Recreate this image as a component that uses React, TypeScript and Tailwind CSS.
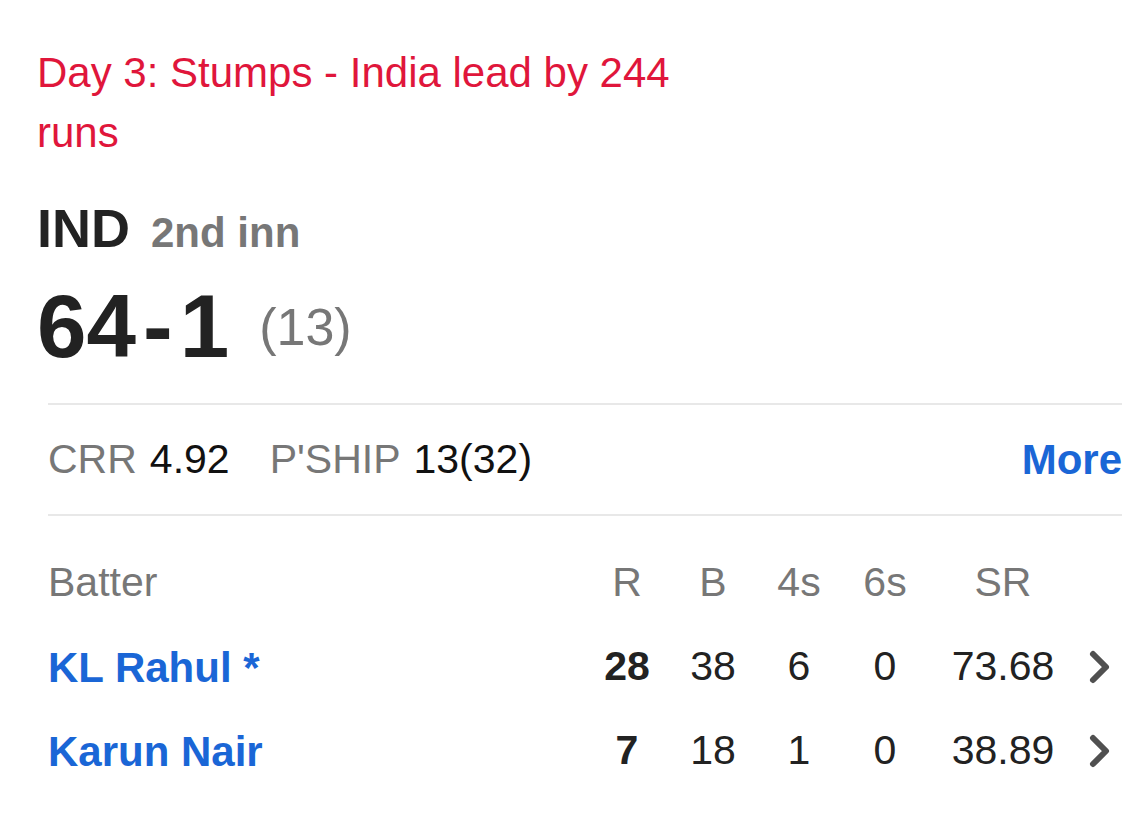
const batters = [
  { name: 'KL Rahul *', r: '28', b: '38', fours: '6', sixes: '0', sr: '73.68' },
  { name: 'Karun Nair', r: '7', b: '18', fours: '1', sixes: '0', sr: '38.89' },
];

const Chevron = () => (
  <svg width="24" height="36" viewBox="0 0 24 36" className="block">
    <polyline points="5,5 18,18 5,31" fill="none" stroke="#505050" strokeWidth="6" strokeLinecap="round" strokeLinejoin="round" />
  </svg>
);

const App = () => {
  return <div className="min-h-screen bg-white pl-[37px] pr-[22px] pt-[43px] font-['Liberation_Sans',Arial,sans-serif]">
      {/* Match status */}
      <p className="w-[680px] text-[42px] leading-[60px] text-[#e0163b]">
        Day 3: Stumps - India lead by 244 runs
      </p>

      {/* Team + innings */}
      <div className="mt-[38px] flex items-baseline leading-none">
        <span className="text-[54px] font-bold text-[#222]">IND</span>
        <span className="ml-[21px] text-[42px] font-bold text-[#777]">2nd inn</span>
      </div>

      {/* Score */}
      <div className="mt-[27px] flex items-center leading-none">
        <span className="text-[89px] font-bold text-[#222]">
          64<span className="mx-[7px]">-</span>1
        </span>
        <span className="ml-[30px] text-[52px] text-[#777]">(13)</span>
      </div>

      <div className="ml-[11px] mt-[32px]">
        <div className="h-[2px] bg-[#e8e8e8]" />
        {/* Run rates */}
        <div className="flex h-[109px] items-center justify-between text-[41px]">
          <div className="flex items-center">
            <span className="text-[#777]">CRR</span>
            <span className="ml-[13px] text-[#111]">4.92</span>
            <span className="ml-[40px] text-[#777]">P'SHIP</span>
            <span className="ml-[13px] text-[#111]">13(32)</span>
          </div>
          <button className="text-[42px] font-bold text-[#1a66d6]">More</button>
        </div>
        <div className="h-[2px] bg-[#e8e8e8]" />

        {/* Batters */}
        <div className="pt-[25px] text-[41px]">
          <div className="grid h-[84px] grid-cols-[536px_86px_86px_86px_86px_150px_1fr] items-center text-[#777]">
            <span>Batter</span>
            <span className="text-center">R</span>
            <span className="text-center">B</span>
            <span className="text-center">4s</span>
            <span className="text-center">6s</span>
            <span className="text-center">SR</span>
            <span />
          </div>
          {batters.map(batter => <div key={batter.name} className="grid h-[84px] grid-cols-[536px_86px_86px_86px_86px_150px_1fr] items-center text-[#222]">
              <span className="text-[42px] font-bold text-[#1a66d6]">{batter.name}</span>
              <span className="text-center font-bold">{batter.r}</span>
              <span className="text-center">{batter.b}</span>
              <span className="text-center">{batter.fours}</span>
              <span className="text-center">{batter.sixes}</span>
              <span className="text-center">{batter.sr}</span>
              <span className="flex justify-center"><Chevron /></span>
            </div>)}
        </div>
      </div>
    </div>;
};

export default App;
